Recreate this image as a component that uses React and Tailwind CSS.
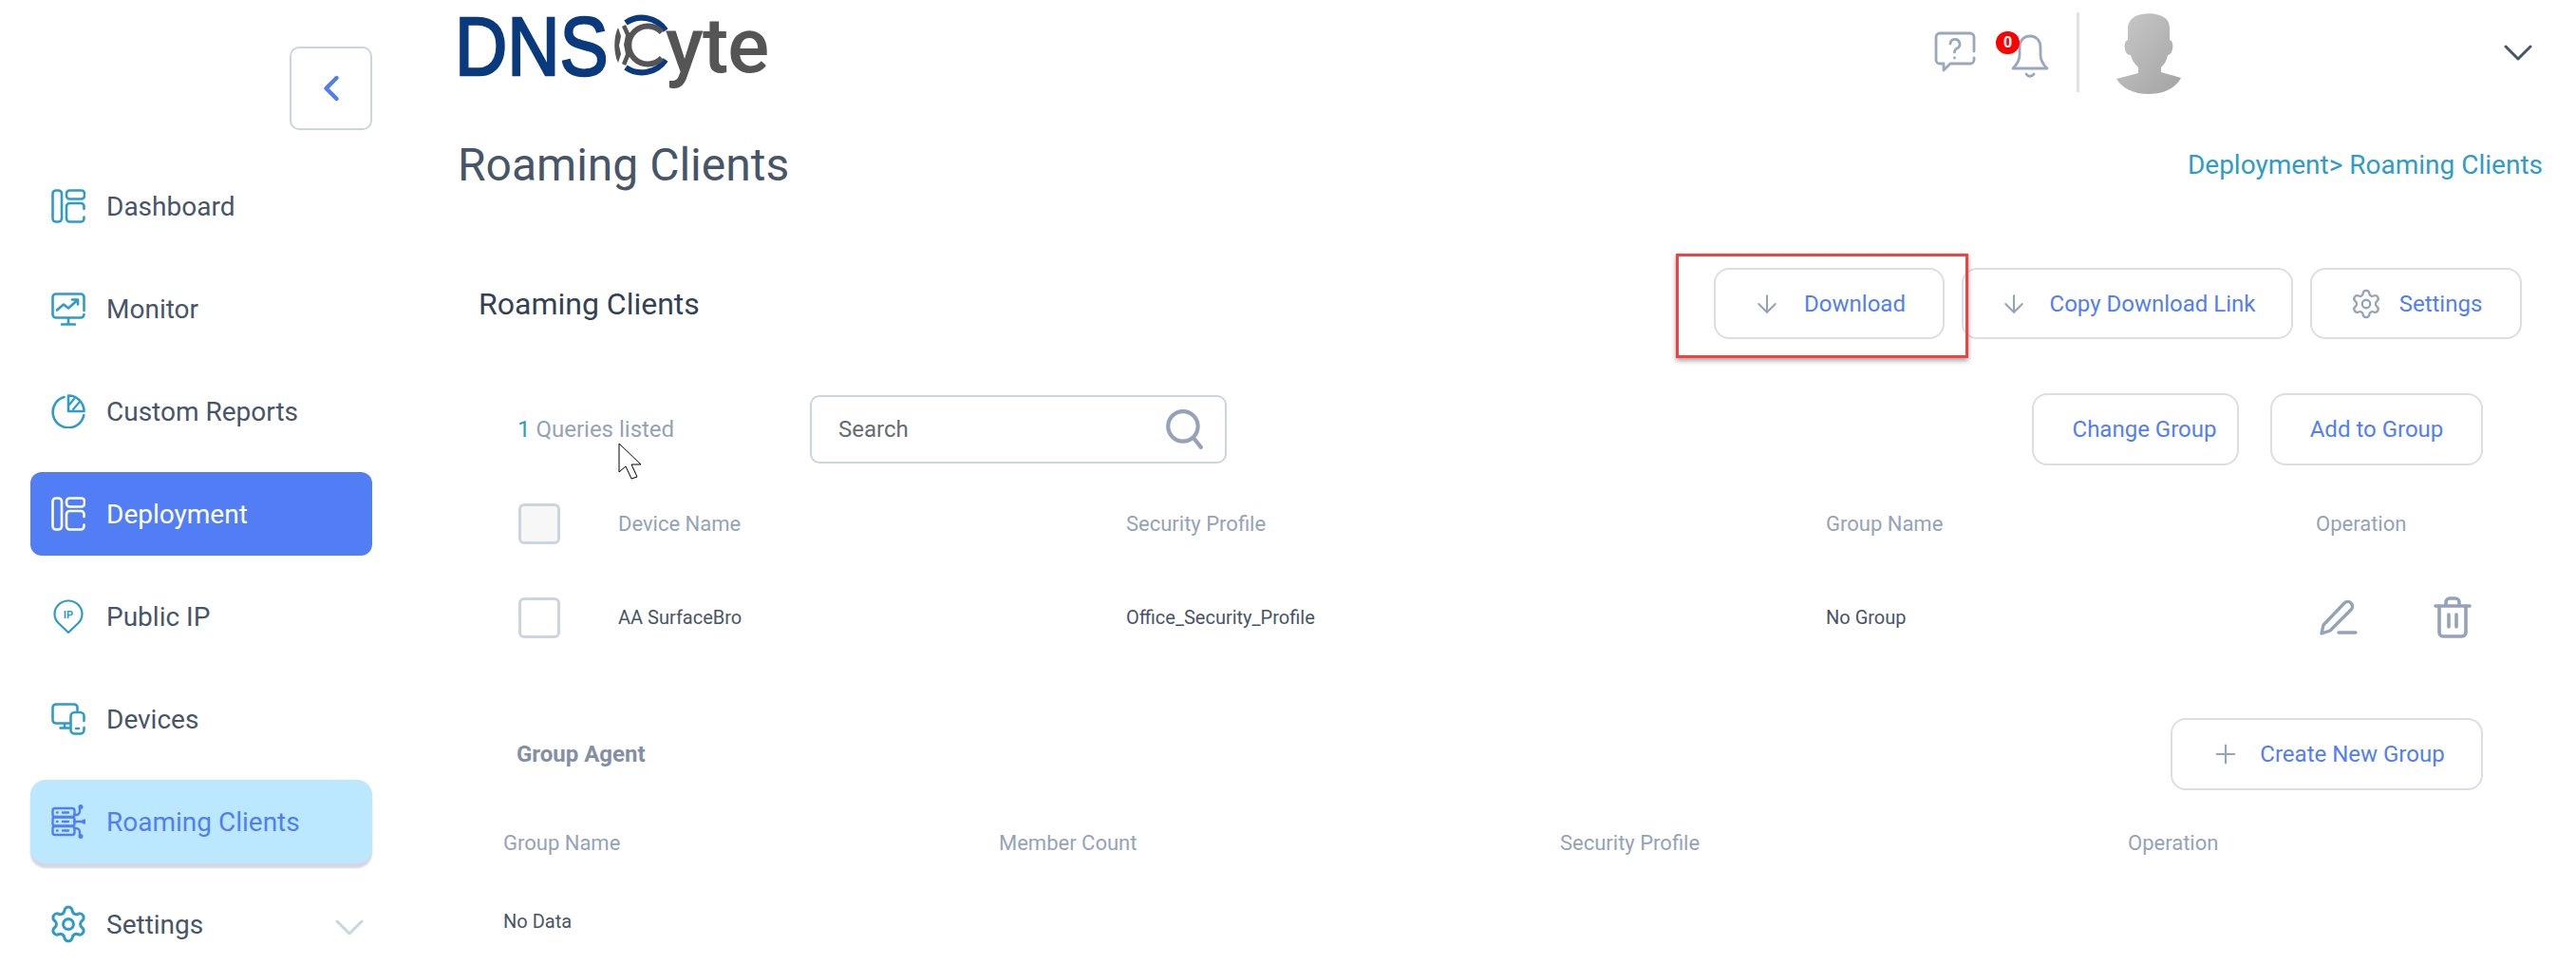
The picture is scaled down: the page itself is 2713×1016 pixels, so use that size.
import { ArrowDown, ChevronLeft, Plus, Settings } from "lucide-react";

const DashIcon = ({ className }) => (
    <svg viewBox="0 0 36 36" fill="none" stroke="currentColor" strokeWidth="2.6" strokeLinecap="round" strokeLinejoin="round" className={className}>
        <rect x="1.5" y="1.5" width="9.5" height="33" rx="3.5" />
        <rect x="16" y="1.5" width="19" height="9" rx="3.5" />
        <path d="M34.5 21v-2.5a3.5 3.5 0 0 0-3.5-3.5H19.5a3.5 3.5 0 0 0-3.5 3.5V31a3.5 3.5 0 0 0 3.5 3.5H31a3.5 3.5 0 0 0 3.5-3.5v-1.5" />
    </svg>
);

const MonitorIcon = ({ className }) => (
    <svg viewBox="0 0 36 36" fill="none" stroke="currentColor" strokeWidth="2.6" strokeLinecap="round" strokeLinejoin="round" className={className}>
        <path d="M34.5 20V6a3.5 3.5 0 0 0-3.5-3.5H5A3.5 3.5 0 0 0 1.5 6v18A3.5 3.5 0 0 0 5 27.5h26a3.5 3.5 0 0 0 3.5-3.5" />
        <path d="M6 19.5l7-6 5 4 9-8" />
        <path d="M22 8.5h6v5" />
        <path d="M18 28v6M11 34.5h14" />
    </svg>
);

const ReportIcon = ({ className }) => (
    <svg viewBox="0 0 36 36" fill="none" stroke="currentColor" strokeWidth="2.6" strokeLinecap="round" strokeLinejoin="round" className={className}>
        <path d="M13.5 3A16.5 16.5 0 1 0 34.3 22" />
        <path d="M18 1.5A16.5 16.5 0 0 1 34.5 18H18z" />
        <path d="M19 11l5-6M23 16l7-8" strokeWidth="2.2" />
    </svg>
);

const PinIcon = ({ className }) => (
    <svg viewBox="0 0 36 36" fill="none" stroke="currentColor" strokeWidth="2.2" strokeLinejoin="round" className={className}>
        <path d="M18 1.5C9.5 1.5 3.5 8 3.5 15.5c0 4.5 2 7.5 4 9.5L18 35l10.5-10c2-2 4-5 4-9.5C32.5 8 26.5 1.5 18 1.5z" />
        <text x="18" y="20" textAnchor="middle" fontSize="11" fontWeight="700" fill="currentColor" stroke="none" fontFamily="Roboto, sans-serif">IP</text>
    </svg>
);

const DevicesIcon = ({ className }) => (
    <svg viewBox="0 0 36 34" fill="none" stroke="currentColor" strokeWidth="2.6" strokeLinecap="round" strokeLinejoin="round" className={className}>
        <path d="M27.5 8V5A3.5 3.5 0 0 0 24 1.5H5A3.5 3.5 0 0 0 1.5 5v13A3.5 3.5 0 0 0 5 21.5h14" />
        <path d="M14 22v4M9.5 26.5H19" />
        <path d="M34.5 19v-5a4 4 0 0 0-4-4h-6a4 4 0 0 0-4 4v14.5a4 4 0 0 0 4 4h6a4 4 0 0 0 4-4V26" />
        <path d="M26 27h3" />
    </svg>
);

const RoamingIcon = ({ className }) => (
    <svg viewBox="0 0 36 36" fill="none" stroke="currentColor" strokeWidth="2.4" strokeLinecap="round" strokeLinejoin="round" className={className}>
        <rect x="1.5" y="4" width="23" height="9" rx="2.5" />
        <rect x="1.5" y="13.5" width="23" height="9" rx="2.5" />
        <rect x="1.5" y="23" width="23" height="9" rx="2.5" />
        <path d="M6 8.5h.5M6 18h.5M6 27.5h.5M12 8.5h6M12 18h6M12 27.5h6" />
        <path d="M24 11h2a4 4 0 0 0 4-4V3M24 18h10M24 25h2a4 4 0 0 1 4 4v4" />
        <circle cx="31" cy="2.5" r="1.3" fill="currentColor" />
        <circle cx="34.5" cy="18" r="1.3" fill="currentColor" />
        <circle cx="31" cy="33.5" r="1.3" fill="currentColor" />
    </svg>
);

const GearIcon = ({ className }) => <Settings strokeWidth={1.7} className={`${className} scale-[1.2]`} />;

const Caret = ({ className }) => (
    <svg viewBox="0 0 30 17" fill="none" stroke="currentColor" strokeWidth="3" strokeLinecap="round" strokeLinejoin="round" className={className}>
        <path d="M2 2l13 13L28 2" />
    </svg>
);

const navItems = [
    { label: "Dashboard", icon: DashIcon },
    { label: "Monitor", icon: MonitorIcon },
    { label: "Custom Reports", icon: ReportIcon },
    { label: "Deployment", icon: DashIcon, style: "primary" },
    { label: "Public IP", icon: PinIcon },
    { label: "Devices", icon: DevicesIcon },
    { label: "Roaming Clients", icon: RoamingIcon, style: "current" },
    { label: "Settings", icon: GearIcon, arrow: true },
];

function NavItem({ item }) {
    const Icon = item.icon;
    let box = "text-[#475569]";
    let iconColor = "text-[#2f9bc8]";
    if (item.style === "primary") {
        box = "bg-[#527ef5] text-white rounded-[12px]";
        iconColor = "text-white";
    }
    if (item.style === "current") {
        box = "bg-[#bbe8ff] text-[#527ef5] rounded-[16px] shadow-[0_5px_2px_rgba(170,175,200,0.5)]";
        iconColor = "text-[#527ef5]";
    }
    return (
        <div className={`flex items-center h-[88px] pl-[22px] pr-[9px] ${box}`}>
            <Icon className={`w-[36px] h-[36px] shrink-0 ${iconColor}`} />
            <span className="ml-[22px] text-[28px] leading-none pt-[2px]">{item.label}</span>
            {item.arrow && <Caret className="ml-auto mt-[6px] w-[30px] h-[17px] text-[#cbd5e1]" />}
        </div>
    );
}

function OutlineButton({ children, className }) {
    return (
        <button className={`h-[75px] border-2 border-[#dcdee5] rounded-[16px] flex items-center justify-center text-[24px] text-[#527ef5] bg-white ${className}`}>
            {children}
        </button>
    );
}

function Logo() {
    return (
        <div className="flex items-start h-[96px] -ml-[3px] select-none">
            <span
                className="text-[88px] leading-[98px] text-[#0a3a7e] origin-left scale-x-[0.87] mr-[-24px] [-webkit-text-stroke:2.5px_#0a3a7e]"
                style={{ fontFamily: "'Liberation Sans', sans-serif" }}
            >
                DNS
            </span>
            <svg viewBox="0 0 58 66" className="w-[58px] h-[66px] mt-[15px] ml-[4px] shrink-0" fill="none">
                <path d="M14 9A30 30 0 0 1 56 17" stroke="#0a3a7e" strokeWidth="6" />
                <path d="M14 56A30 30 0 0 0 56 48" stroke="#0a3a7e" strokeWidth="6" />
                <path d="M52 19A20 20 0 1 0 52 46" stroke="#555555" strokeWidth="6" />
                <path d="M6 14C1 24 1 41 6 51l3-9-2-9 2-10z" fill="#555555" />
                <path d="M10 13l4-2 5 11-3 10 3 10-5 12-4-2 4-10-2-10 2-10z" fill="#555555" />
            </svg>
            <span className="text-[82px] leading-[96px] font-medium text-[#555555] tracking-[-1px] ml-[-2px]" style={{ fontFamily: "Roboto, sans-serif" }}>yte</span>
        </div>
    );
}

export default function App() {
    return (
        <div className="relative flex w-[2713px] h-[1016px] overflow-hidden bg-white text-[#475569]" style={{ fontFamily: "Roboto, sans-serif" }}>
            <aside className="w-[451px] shrink-0 pl-[32px] pr-[59px] pt-[49px]">
                <div className="ml-auto w-[87px] h-[88px] border-2 border-[#cbd5e1] rounded-[10px] flex items-center justify-center text-[#4f7df3]">
                    <ChevronLeft strokeWidth={2.4} className="w-[44px] h-[44px]" />
                </div>
                <nav className="mt-[36px] flex flex-col gap-[20px]">
                    {navItems.map((item) => (
                        <NavItem key={item.label} item={item} />
                    ))}
                </nav>
            </aside>

            <main className="flex-1 min-w-0 relative">
                <header className="flex items-start h-[104px] pl-[31px]">
                    <Logo />
                    <div className="ml-auto flex items-start">
                        <svg viewBox="0 0 44 44" fill="none" stroke="#9aa8be" strokeWidth="2.8" strokeLinecap="round" strokeLinejoin="round" className="w-[44px] h-[44px] mt-[33px]">
                            <path d="M42 21V6a4 4 0 0 0-4-4H6a4 4 0 0 0-4 4v24a4 4 0 0 0 4 4h4v7l7-7h21a4 4 0 0 0 4-4v-2" />
                            <path d="M17 13a5 5 0 1 1 7 5c-2 1-2.5 2-2.5 4" />
                            <path d="M21.5 28v.1" />
                        </svg>
                        <div className="relative ml-[36px] mt-[36px] w-[42px] h-[46px]">
                            <svg viewBox="0 0 42 46" fill="none" stroke="#9aa8be" strokeWidth="2.8" strokeLinecap="round" strokeLinejoin="round" className="w-[42px] h-[46px]">
                                <path d="M21 2c-7 0-11 5-11 12v8c0 6-3 10-7 14h36c-4-4-7-8-7-14v-8c0-7-4-12-11-12z" />
                                <path d="M17 42c2 3 6 3 8 0" />
                            </svg>
                            <span className="absolute left-[-15px] top-[-3px] w-[25px] h-[24px] rounded-full bg-[#ff0000] text-white text-[16px] font-bold leading-[24px] text-center">0</span>
                        </div>
                        <div className="ml-[28px] mt-[13px] w-[3px] h-[84px] bg-[#dfe3e8]" />
                        <svg viewBox="0 0 68 86" className="ml-[39px] mt-[14px] w-[68px] h-[86px]">
                            <defs>
                                <linearGradient id="face" x1="0" y1="0" x2="1" y2="1">
                                    <stop offset="0" stopColor="#c9c9c9" />
                                    <stop offset="1" stopColor="#a3a3a3" />
                                </linearGradient>
                            </defs>
                            <path
                                fill="url(#face)"
                                d="M20 3C26 0 38-1 45 2C52 4 56 8 56 16L56 28C59 29 60 33 59 38C58 42 56 44 54 44C53 50 50 54 47 57L47 62L68 68C62 79 50 85 34 85C18 85 6 79 0 69L23 63L23 57C19 53 16 49 15 44C12 44 10 42 9 38C8 33 9 29 12 28L12 16C12 10 15 6 20 3Z"
                            />
                        </svg>
                        <Caret className="ml-[340px] mt-[47px] w-[30px] h-[17px] text-[#475569] mr-[46px]" />
                    </div>
                </header>

                <div className="flex items-center justify-between h-[70px] pl-[31px] pr-[35px] mt-[35px]">
                    <h1 className="text-[48px] font-normal leading-none text-[#475569]">Roaming Clients</h1>
                    <span className="text-[28px] text-[#2f9bc8]">Deployment&gt; Roaming Clients</span>
                </div>

                <div className="flex items-center mt-[73px] pl-[53px] pr-[57px]">
                    <h2 className="text-[32px] leading-none font-normal text-[#334155]">Roaming Clients</h2>
                    <div className="ml-auto flex gap-[18px]">
                        <OutlineButton className="w-[243px] gap-[24px]">
                            <ArrowDown strokeWidth={1.6} className="w-[30px] h-[30px] text-[#94a3b8]" />
                            Download
                        </OutlineButton>
                        <OutlineButton className="w-[349px] gap-[23px]">
                            <ArrowDown strokeWidth={1.6} className="w-[30px] h-[30px] text-[#94a3b8]" />
                            Copy Download Link
                        </OutlineButton>
                        <OutlineButton className="w-[223px] gap-[18px]">
                            <Settings strokeWidth={1.6} className="w-[34px] h-[34px] text-[#94a3b8]" />
                            Settings
                        </OutlineButton>
                    </div>
                </div>

                <div className="flex items-center mt-[57px] pl-[94px] pr-[98px]">
                    <span className="w-[308px] text-[24px] text-[#94a3b8]">
                        <span className="text-[#2f9bc8]">1</span> Queries listed
                    </span>
                    <div className="w-[439px] h-[72px] border-2 border-[#cbd5e1] rounded-[10px] flex items-center pl-[28px] pr-[20px]">
                        <span className="text-[24px] text-[#666b73]">Search</span>
                        <svg viewBox="0 0 42 40" fill="none" stroke="#94a3b8" strokeWidth="4" strokeLinecap="round" className="ml-auto w-[44px] h-[42px]">
                            <circle cx="19" cy="17" r="15" />
                            <path d="M30 29l7 9" />
                        </svg>
                    </div>
                    <div className="ml-auto flex gap-[33px]">
                        <OutlineButton className="w-[218px] h-[76px] pl-[19px]">Change Group</OutlineButton>
                        <OutlineButton className="w-[224px] h-[76px]">Add to Group</OutlineButton>
                    </div>
                </div>

                <div className="grid grid-cols-[105px_535px_737px_516px_1fr] items-center mt-[39px] pl-[95px] h-[44px] text-[22px] text-[#94a3b8]">
                    <div className="w-[44px] h-[43px] border-[3px] border-[#cbd5e1] rounded-[6px] bg-[#f7f7f8]" />
                    <span>Device Name</span>
                    <span>Security Profile</span>
                    <span>Group Name</span>
                    <span>Operation</span>
                </div>

                <div className="grid grid-cols-[105px_535px_737px_516px_1fr] items-center mt-[55px] pl-[95px] h-[44px] text-[20px] text-[#475569]">
                    <div className="w-[44px] h-[43px] border-[3px] border-[#cbd5e1] rounded-[6px]" />
                    <span>AA SurfaceBro</span>
                    <span>Office_Security_Profile</span>
                    <span>No Group</span>
                    <div className="flex items-center gap-[80px] pl-[4px]">
                        <svg viewBox="0 0 40 38" fill="none" stroke="#94a3b8" strokeWidth="3.4" strokeLinecap="round" strokeLinejoin="round" className="w-[40px] h-[38px]">
                            <path d="M2 36l2-9L26 4c2-2 5-2 7 0s2 5 0 7L11 33z" />
                            <path d="M20 35h18" />
                        </svg>
                        <svg viewBox="0 0 40 44" fill="none" stroke="#94a3b8" strokeWidth="3.6" strokeLinecap="round" strokeLinejoin="round" className="w-[40px] h-[44px]">
                            <path d="M2 10h36" />
                            <path d="M6 10v28a4 4 0 0 0 4 4h20a4 4 0 0 0 4-4V10" />
                            <path d="M13 9V6a4 4 0 0 1 4-4h6a4 4 0 0 1 4 4v3" />
                            <path d="M16 19v13M24 19v13" />
                        </svg>
                    </div>
                </div>

                <div className="flex items-center mt-[84px] pl-[93px] pr-[98px]">
                    <span className="text-[24px] font-bold text-[#848fa3]">Group Agent</span>
                    <OutlineButton className="ml-auto w-[329px] h-[76px] gap-[20px] pl-[2px]">
                        <Plus strokeWidth={1.6} className="w-[32px] h-[32px] text-[#94a3b8]" />
                        Create New Group
                    </OutlineButton>
                </div>

                <div className="grid grid-cols-[522px_591px_598px_1fr] items-center mt-[39px] pl-[79px] text-[22px] text-[#94a3b8]">
                    <span>Group Name</span>
                    <span>Member Count</span>
                    <span>Security Profile</span>
                    <span>Operation</span>
                </div>

                <p className="mt-[51px] pl-[79px] text-[20px] text-[#475569]">No Data</p>
            </main>

            {/* red annotation box from the screenshot */}
            <div className="absolute left-[1765px] top-[267px] w-[308px] h-[110px] border-[3px] border-[#f44040] shadow-[0_3px_5px_rgba(0,0,0,0.35)] pointer-events-none" />
            {/* mouse pointer */}
            <svg viewBox="0 0 26 40" className="absolute left-[651px] top-[466px] w-[26px] h-[40px]" fill="white" stroke="black" strokeWidth="1">
                <path d="M1 1v30l7-6 6 13 6-2-6-13h10z" />
            </svg>
        </div>
    );
}
